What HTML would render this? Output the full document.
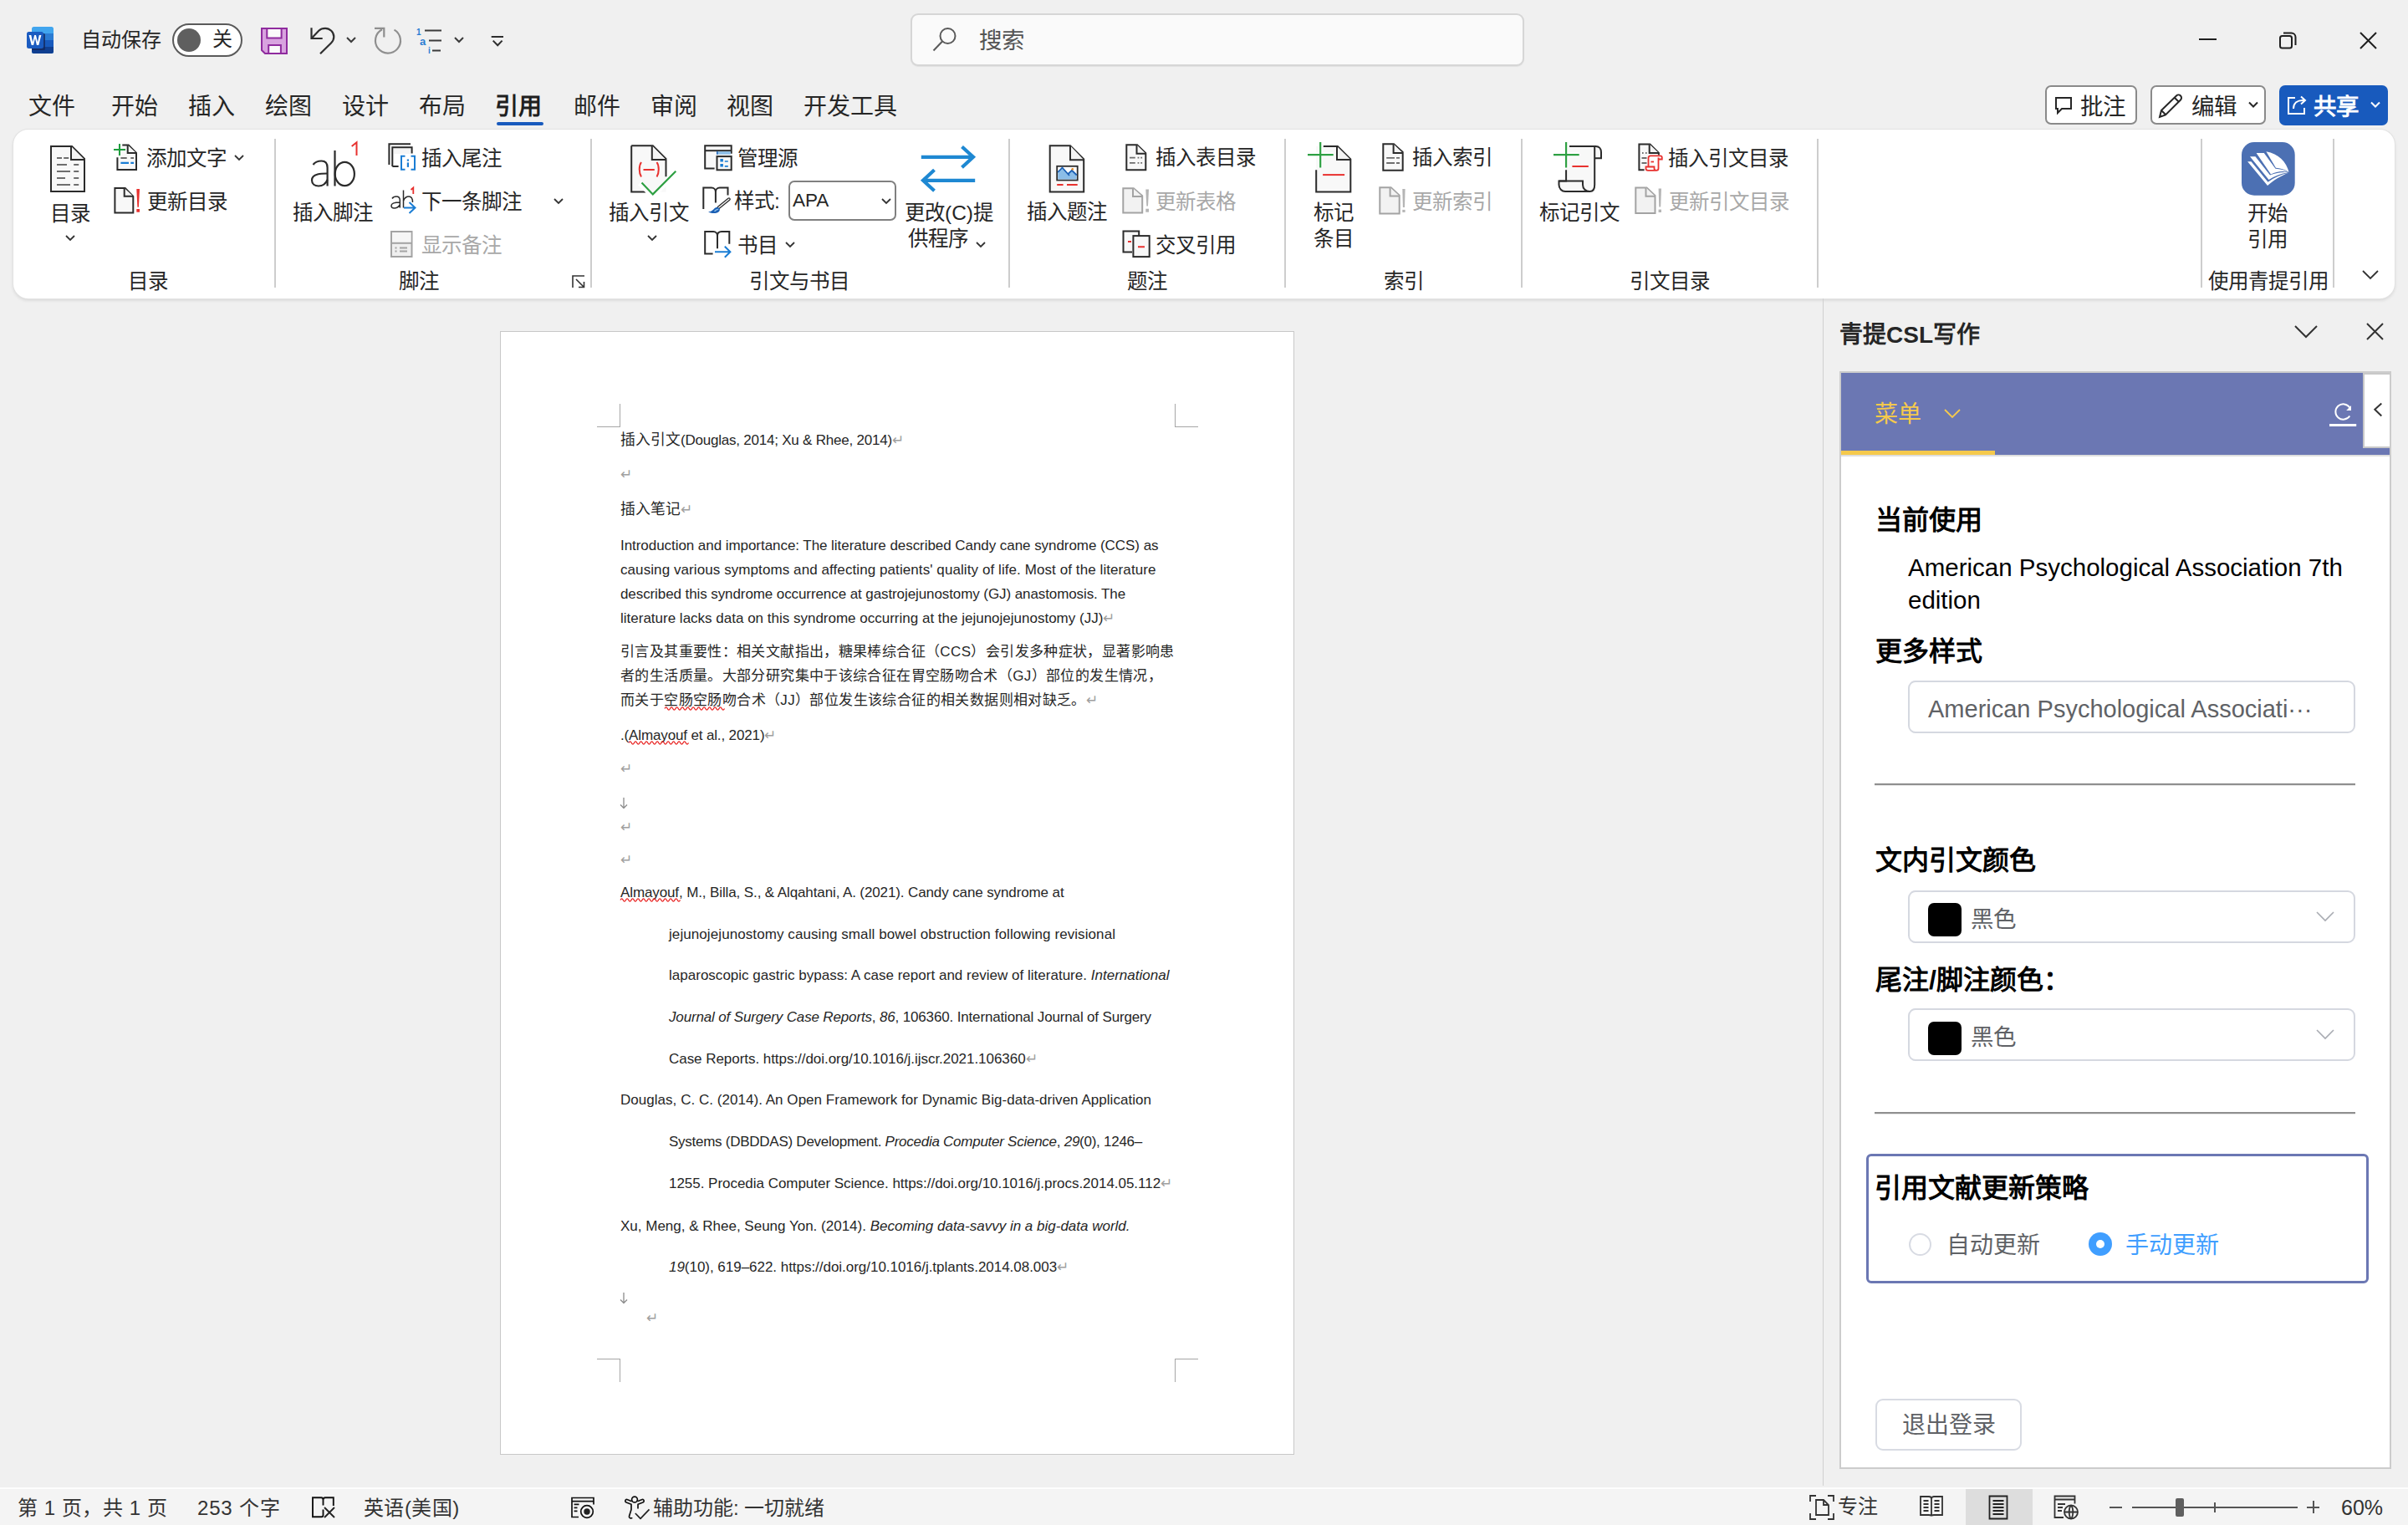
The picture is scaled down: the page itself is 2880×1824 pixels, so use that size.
<!DOCTYPE html>
<html lang="zh-CN"><head><meta charset="utf-8">
<style>
html,body{margin:0;padding:0}
body{width:2880px;height:1824px;position:relative;overflow:hidden;background:#f0f0f0;font-family:"Liberation Sans",sans-serif;color:#262626}
.t{position:absolute;white-space:nowrap;line-height:1}
.a{position:absolute}
svg{position:absolute;overflow:visible}
.dis{color:#a8a8a8}
.pm{color:#a0a0a0;font-size:17px;letter-spacing:0}
.sq{}
</style></head><body>
<!-- TITLE BAR -->
<svg style="left:32px;top:32px" width="32" height="32" viewBox="0 0 32 32">
<rect x="6" y="0" width="26" height="32" rx="2.5" fill="#41a5ee"/>
<rect x="6" y="8" width="26" height="8" fill="#2b7cd3"/>
<rect x="6" y="16" width="26" height="8" fill="#185abd"/>
<path d="M6 24h26v5.5a2.5 2.5 0 0 1-2.5 2.5h-21A2.5 2.5 0 0 1 6 29.5z" fill="#103f91"/>
<rect x="6" y="8" width="16" height="20" rx="1.5" fill="#13275a" opacity="0.75"/>
<rect x="0" y="6" width="20" height="20" rx="2.5" fill="#1a5bc0"/>
<path d="M2.6 10H5.3L7.1 18.6 9.1 10H11L13 18.6 14.8 10H17.4L14.3 22H11.9L10 13.8 8.1 22H5.7Z" fill="#fff"/>
</svg>
<div class="t" style="left:97px;top:36px;font-size:24px">自动保存</div>
<div class="a" style="left:206px;top:28px;width:80px;height:36px;border:2px solid #5a5a5a;border-radius:20px;background:#fff"></div>
<div class="a" style="left:212px;top:34px;width:28px;height:28px;border-radius:50%;background:#5f5f5f"></div>
<div class="t" style="left:254px;top:35px;font-size:24px">关</div>
<svg style="left:312px;top:33px" width="32" height="32" viewBox="0 0 32 32">
<path d="M1 1H31V31H5L1 27Z" fill="#d8a3df" stroke="#8f2b9e" stroke-width="2"/>
<rect x="7.3" y="1" width="17.3" height="11.5" fill="#fafafa" stroke="#8f2b9e" stroke-width="2"/>
<rect x="9.2" y="21" width="14.7" height="10" fill="#fafafa" stroke="#8f2b9e" stroke-width="2"/>
</svg>
<svg style="left:370px;top:33px" width="32" height="32" viewBox="0 0 32 32" fill="none" stroke="#2e2e2e" stroke-width="2.2">
<path d="M2.5 0.3V13H15.7"/>
<path d="M3 12.5L11.5 3.5C13.5 1.5 16 0.8 19 0.8C24.5 0.8 29.3 5.5 29.3 11C29.3 14 28 16.5 26 18.5L13 31.3"/>
</svg>
<svg style="left:414px;top:44px" width="12" height="8" viewBox="0 0 12 8" fill="none" stroke="#3b3b3b" stroke-width="2"><path d="M1 1l5 5 5-5"/></svg>
<svg style="left:448px;top:33px" width="34" height="34" viewBox="0 0 34 34" fill="none" stroke="#8f8f8f" stroke-width="2.2">
<path d="M9 2.3A15 15 0 1 0 23.5 2.6"/><path d="M0 0.8H11.3V11.5"/>
</svg>
<svg style="left:497px;top:33px" width="34" height="32" viewBox="0 0 34 32">
<text x="1" y="9" font-size="10" font-family="Liberation Sans" font-weight="700" fill="#2b7cd3">1</text>
<text x="5" y="21" font-size="13" font-family="Liberation Sans" font-weight="700" fill="#2b7cd3">a</text>
<text x="15" y="31" font-size="10" font-family="Liberation Sans" font-weight="700" fill="#2b7cd3">i</text>
<path d="M11 3.5h20M16 15.5h15M20 27.5h10" stroke="#3b3b3b" stroke-width="2"/>
</svg>
<svg style="left:543px;top:44px" width="12" height="8" viewBox="0 0 12 8" fill="none" stroke="#3b3b3b" stroke-width="2"><path d="M1 1l5 5 5-5"/></svg>
<svg style="left:586px;top:41px" width="18" height="16" viewBox="0 0 18 16" fill="none" stroke="#2e2e2e" stroke-width="2"><path d="M1.7 3H16M3.7 7.6L9.2 13.2 14.6 7.6"/></svg>

<!-- search -->
<div class="a" style="left:1089px;top:16px;width:730px;height:59px;border:2px solid #d6d6d6;border-radius:9px;background:#fafafa;box-shadow:0 1px 1px rgba(0,0,0,0.06)"></div>
<svg style="left:1115px;top:32px" width="30" height="32" viewBox="0 0 30 32" fill="none" stroke="#5a5a5a" stroke-width="2"><circle cx="18.5" cy="11" r="9"/><path d="M12 17.5L1.5 28.5"/></svg>
<div class="t" style="left:1171px;top:35px;font-size:27.5px;color:#555">搜索</div>

<!-- window controls -->
<div class="a" style="left:2630px;top:46px;width:21px;height:2px;background:#1f1f1f"></div>
<svg style="left:2726px;top:38px" width="21" height="21" viewBox="0 0 21 21" fill="none" stroke="#1f1f1f" stroke-width="2"><rect x="1" y="5" width="14" height="14.5" rx="2.5"/><path d="M5 1.5h9.5a5 5 0 0 1 5 5V16"/></svg>
<svg style="left:2822px;top:38px" width="21" height="21" viewBox="0 0 21 21" fill="none" stroke="#1f1f1f" stroke-width="2"><path d="M1 1l19 19M20 1L1 20"/></svg>

<!-- TABS -->
<div class="t" style="left:34px;top:114px;font-size:28px">文件</div>
<div class="t" style="left:133px;top:114px;font-size:28px">开始</div>
<div class="t" style="left:225px;top:114px;font-size:28px">插入</div>
<div class="t" style="left:317px;top:114px;font-size:28px">绘图</div>
<div class="t" style="left:409px;top:114px;font-size:28px">设计</div>
<div class="t" style="left:501px;top:114px;font-size:28px">布局</div>
<div class="t" style="left:592px;top:114px;font-size:28px;font-weight:700;color:#1f1f1f">引用</div>
<div class="a" style="left:594px;top:146px;width:56px;height:4px;border-radius:2px;background:#185abd"></div>
<div class="t" style="left:686px;top:114px;font-size:28px">邮件</div>
<div class="t" style="left:778px;top:114px;font-size:28px">审阅</div>
<div class="t" style="left:869px;top:114px;font-size:28px">视图</div>
<div class="t" style="left:961px;top:114px;font-size:28px">开发工具</div>

<!-- right buttons -->
<div class="a" style="left:2446px;top:102px;width:106px;height:43px;border:2px solid #8a8a8a;border-radius:7px;background:#fff"></div>
<svg style="left:2457px;top:115px" width="22" height="22" viewBox="0 0 22 22" fill="none" stroke="#262626" stroke-width="2"><path d="M2 2h18v13H9l-5 5v-5H2z"/></svg>
<div class="t" style="left:2488px;top:114px;font-size:27.5px">批注</div>
<div class="a" style="left:2572px;top:102px;width:134px;height:43px;border:2px solid #8a8a8a;border-radius:7px;background:#fff"></div>
<svg style="left:2581px;top:112px" width="34" height="30" viewBox="0 0 34 30" fill="none" stroke="#262626" stroke-width="2"><path d="M2 28l2-8L22 2.5a3.5 3.5 0 0 1 5 5L9 25.5z M20 5l5 5 M4 20l5 5"/></svg>
<div class="t" style="left:2621px;top:114px;font-size:27.5px">编辑</div>
<svg style="left:2689px;top:121px" width="12" height="9" viewBox="0 0 12 9" fill="none" stroke="#262626" stroke-width="2"><path d="M1 1.5l5 5 5-5"/></svg>
<div class="a" style="left:2726px;top:102px;width:130px;height:48px;border-radius:7px;background:#185abd"></div>
<svg style="left:2735px;top:113px" width="25" height="25" viewBox="0 0 25 25" fill="none" stroke="#fff" stroke-width="2"><path d="M10 4H2v19h19v-7"/><path d="M8 17c0-7 5-10 11-10h1.5M17 2.5l5 4.5-5 4.5"/></svg>
<div class="t" style="left:2767px;top:114px;font-size:27.5px;color:#fff;font-weight:700">共享</div>
<svg style="left:2835px;top:121px" width="12" height="9" viewBox="0 0 12 9" fill="none" stroke="#fff" stroke-width="2"><path d="M1 1.5l5 5 5-5"/></svg>

<!-- RIBBON -->
<div class="a" style="left:16px;top:155px;width:2848px;height:202px;border-radius:18px;background:#fff;box-shadow:0 0 0 1px #e2e2e2,0 2px 4px rgba(0,0,0,0.12)"></div>
<!-- separators -->
<div class="a" style="left:328px;top:166px;width:2px;height:178px;background:#cdcdcd"></div>
<div class="a" style="left:706px;top:166px;width:2px;height:178px;background:#cdcdcd"></div>
<div class="a" style="left:1206px;top:166px;width:2px;height:178px;background:#cdcdcd"></div>
<div class="a" style="left:1536px;top:166px;width:2px;height:178px;background:#cdcdcd"></div>
<div class="a" style="left:1819px;top:166px;width:2px;height:178px;background:#cdcdcd"></div>
<div class="a" style="left:2173px;top:166px;width:2px;height:178px;background:#cdcdcd"></div>
<div class="a" style="left:2632px;top:166px;width:2px;height:178px;background:#cdcdcd"></div>
<div class="a" style="left:2790px;top:166px;width:2px;height:178px;background:#cdcdcd"></div>
<!-- group labels -->
<div class="t" style="left:153px;top:325px;font-size:24.5px">目录</div>
<div class="t" style="left:477px;top:325px;font-size:24.5px">脚注</div>
<svg style="left:684px;top:329px" width="16" height="16" viewBox="0 0 16 16" fill="none" stroke="#333" stroke-width="1.6"><path d="M1 15V1h14M5 5l9.5 9.5M14.5 8v6.5H8"/></svg>
<div class="t" style="left:896px;top:325px;font-size:24.5px">引文与书目</div>
<div class="t" style="left:1348px;top:325px;font-size:24.5px">题注</div>
<div class="t" style="left:1655px;top:325px;font-size:24.5px">索引</div>
<div class="t" style="left:1949px;top:325px;font-size:24.5px">引文目录</div>
<div class="t" style="left:2641px;top:325px;font-size:24.5px">使用青提引用</div>
<svg style="left:2825px;top:323px" width="20" height="12" viewBox="0 0 20 12" fill="none" stroke="#333" stroke-width="1.8"><path d="M1 1l9 9 9-9"/></svg>

<!-- 目录 big -->
<svg style="left:60px;top:174px" width="42" height="56" viewBox="0 0 42 56">
<path d="M1 1H26L41 16V55H1Z" fill="#f8f8f8" stroke="#2b2b2b" stroke-width="2"/>
<path d="M25 1V17H41" fill="#f4f4f4" stroke="#2b2b2b" stroke-width="2"/>
<path d="M8 15h6M16.2 15h6M8 23h12M28.2 23h6M8 31h16M28.2 31h6M8 39h10M28.2 39h6M8 47h16M28.2 47h6" stroke="#6e6e6e" stroke-width="2"/>
</svg>
<div class="t" style="left:60px;top:244px;font-size:24.5px">目录</div>
<svg style="left:78px;top:281px" width="12" height="8" viewBox="0 0 12 8" fill="none" stroke="#333" stroke-width="1.8"><path d="M1 1l5 5 5-5"/></svg>
<!-- 添加文字 -->
<svg style="left:136px;top:172px" width="30" height="34" viewBox="0 0 30 34">
<path d="M4.4 1.6H17.7L27 11V31H4.4Z" fill="#f8f8f8"/>
<path d="M10.3 1.6H17.7L27 11V31H4.4V16.3" fill="none" stroke="#2b2b2b" stroke-width="2"/>
<path d="M16.7 1.6V10.9H27" fill="#f4f4f4" stroke="#2b2b2b" stroke-width="2"/>
<path d="M0 7h14M7 0v14" stroke="#1e9e3e" stroke-width="2"/>
<path d="M8.4 16.9h7.3M20.3 16.9h3.7" stroke="#6e6e6e" stroke-width="2"/>
<path d="M8.4 22.9h9.6M20.3 22.9h3.7" stroke="#1a7dd4" stroke-width="2.4"/>
</svg>
<div class="t" style="left:175px;top:178px;font-size:24.5px">添加文字</div>
<svg style="left:280px;top:185px" width="12" height="8" viewBox="0 0 12 8" fill="none" stroke="#333" stroke-width="1.8"><path d="M1 1l5 5 5-5"/></svg>
<!-- 更新目录 -->
<svg style="left:136px;top:224px" width="32" height="32" viewBox="0 0 32 32">
<path d="M1.4 1.1H13.7L23.3 10.8V30.4H1.4Z" fill="#f8f8f8" stroke="#2b2b2b" stroke-width="2"/>
<path d="M12.7 1.1V10.8H23.3" fill="#f4f4f4" stroke="#2b2b2b" stroke-width="2"/>
<path d="M27.3 2H31L29.9 23.7H28.4Z" fill="#e8312f"/><rect x="27.3" y="26" width="3.7" height="3.7" fill="#e8312f"/>
</svg>
<div class="t" style="left:176px;top:230px;font-size:24.5px">更新目录</div>

<!-- 插入脚注 big -->
<svg style="left:368px;top:168px" width="64" height="58" viewBox="0 0 64 58" fill="none" stroke="#2b2b2b" stroke-width="2.2">
<path d="M32.5 12V54.5"/><ellipse cx="44.3" cy="40" rx="11.6" ry="14.2"/>
<path d="M6.5 29C9 25.5 13 24.5 16.5 24.5C21.5 24.5 23.6 28 23.6 32.5V54.5"/>
<path d="M23.6 39.5C17 39.5 5 39.5 5 47.5C5 52 8.5 54.5 13 54.5C18 54.5 22 51 23.6 47"/>
<path d="M52.7 7L58.5 2.3V18" stroke="#e8312f" stroke-width="2"/>
</svg>
<div class="t" style="left:350px;top:243px;font-size:24.5px">插入脚注</div>
<!-- 插入尾注 -->
<svg style="left:464px;top:171px" width="34" height="34" viewBox="0 0 34 34">
<path d="M1.4 26V1.3H27" fill="none" stroke="#2b2b2b" stroke-width="2"/>
<path d="M5.3 28V5.2H28.6V12.6" fill="none" stroke="#2b2b2b" stroke-width="2"/>
<path d="M7 7h20v6H7z" fill="#f5f5f5"/>
<path d="M5.3 28H12.6" stroke="#2b2b2b" stroke-width="2"/>
<path d="M20.5 15.8H16V31.8H20.5M27.5 15.8H32V31.8H27.5" fill="none" stroke="#1a7dd4" stroke-width="2"/>
<rect x="22.8" y="19.5" width="2.2" height="2.2" fill="#1a7dd4"/><rect x="22.8" y="23.4" width="2.2" height="5.5" fill="#1a7dd4"/>
</svg>
<div class="t" style="left:504px;top:178px;font-size:24.5px">插入尾注</div>
<!-- 下一条脚注 -->
<svg style="left:466px;top:222px" width="34" height="36" viewBox="0 0 34 36" fill="none" stroke="#2b2b2b" stroke-width="1.5">
<path d="M16.5 5.5V26.5"/><path d="M16.5 18C18 14.5 20 13 23 13C26 13 27.5 16 27.5 20"/>
<path d="M3 15.5C4 13.8 6 13 8 13C11 13 12.3 15 12.3 17.5V26.5M12.3 20C8.5 20 2 20.5 2 24C2 26 3.5 27 5.5 27C8.5 27 11 25 12.3 23"/>
<path d="M25.5 5L28.3 2.5V10" stroke="#e8312f" stroke-width="1.8"/>
<path d="M17 26.5H30.5M23.5 20l7 6.5-7 6.5" stroke="#1a7dd4" stroke-width="2"/>
</svg>
<div class="t" style="left:504px;top:230px;font-size:24.5px">下一条脚注</div>
<svg style="left:662px;top:237px" width="12" height="8" viewBox="0 0 12 8" fill="none" stroke="#333" stroke-width="1.8"><path d="M1 1l5 5 5-5"/></svg>
<!-- 显示备注 -->
<svg style="left:467px;top:276px" width="27" height="32" viewBox="0 0 27 32">
<rect x="1" y="1" width="24.5" height="30" fill="#efefef" stroke="#a3a3a3" stroke-width="2"/>
<rect x="2" y="2" width="22.5" height="12.8" fill="#f6f6f6"/>
<path d="M1 14.8H25.5" stroke="#a3a3a3" stroke-width="2"/>
<path d="M5.5 20.5h2M5.5 24.5h2M11 20.5h9M11 24.5h9" stroke="#a3a3a3" stroke-width="1.8"/>
</svg>
<div class="t dis" style="left:504px;top:282px;font-size:24.5px">显示备注</div>

<!-- 插入引文 big -->
<svg style="left:754px;top:173px" width="58" height="62" viewBox="0 0 58 62">
<path d="M1.2 1.3H26.8L42.5 17V56.4H1.2Z" fill="#f8f8f8"/>
<path d="M1.2 1.3H26.8L42.5 17V38.2M18.4 56.4H1.2V1.3" fill="none" stroke="#2b2b2b" stroke-width="2"/>
<path d="M25.8 1.3V18H42.5" fill="#f4f4f4" stroke="#2b2b2b" stroke-width="2"/>
<path d="M13 21C10 25 10 34 13 38.5M31.5 21C34.5 25 34.5 34 31.5 38.5M15.5 29.9H28.8" fill="none" stroke="#e8312f" stroke-width="2"/>
<path d="M11 46L26.8 61.5 56.5 31.8" fill="none" stroke="#fff" stroke-width="6"/>
<path d="M13.5 45.6L26.8 59.4 54.3 31.8" fill="none" stroke="#2ea043" stroke-width="2.2"/>
</svg>
<div class="t" style="left:728px;top:243px;font-size:24.5px">插入引文</div>
<svg style="left:774px;top:281px" width="12" height="8" viewBox="0 0 12 8" fill="none" stroke="#333" stroke-width="1.8"><path d="M1 1l5 5 5-5"/></svg>
<!-- 管理源 -->
<svg style="left:842px;top:173px" width="34" height="32" viewBox="0 0 34 32">
<path d="M1.2 1.3H32.7V28.4H1.2Z" fill="#f8f8f8"/>
<path d="M12.6 28.4H1.2V1.3H32.7V10.7" fill="none" stroke="#2b2b2b" stroke-width="2"/>
<path d="M1.2 7.2H32.7" stroke="#2b2b2b" stroke-width="2"/>
<rect x="15" y="8.2" width="16.7" height="3.5" fill="#8bbde8"/><rect x="15" y="8.2" width="1.5" height="3.5" fill="#1a5fb4"/>
<rect x="15.5" y="14.1" width="17.2" height="16.2" fill="#f8f8f8" stroke="#2b2b2b" stroke-width="2"/>
<rect x="19.4" y="17" width="3.5" height="3.5" fill="#1a7dd4"/><rect x="19.4" y="23" width="3.5" height="3.5" fill="#1a7dd4"/>
<path d="M24.8 20h4M24.8 25.9h4" stroke="#1a7dd4" stroke-width="1.6"/>
</svg>
<div class="t" style="left:882px;top:178px;font-size:24.5px">管理源</div>
<!-- 样式 -->
<svg style="left:840px;top:223px" width="34" height="34" viewBox="0 0 34 34">
<path d="M1.3 27V1.6H11C13.8 1.6 15.9 3.5 15.9 6.5V19.5M15.9 6.5C15.9 3.5 18 1.6 20.8 1.6H30.5V10.5" fill="none" stroke="#2b2b2b" stroke-width="2"/>
<path d="M31.8 15.3L19.5 25.3" stroke="#fff" stroke-width="6" stroke-linecap="round"/>
<path d="M31.8 15.3L19.5 25.3" stroke="#2b2b2b" stroke-width="4" stroke-linecap="round"/>
<path d="M31.8 15.3L19.5 25.3" stroke="#f8f8f8" stroke-width="1.4" stroke-linecap="round"/>
<path d="M7 30.3C10.5 30.5 12.5 28.5 14.5 26.3C16.5 24.3 20 24.5 20.8 27C21.3 30 18.5 31.8 15.5 32C12 32.3 9 31.8 7 30.3Z" fill="#1a5fb4"/>
<path d="M14.5 29.8C16 28.3 17.5 27.3 19.2 27.3" stroke="#8bbde8" stroke-width="1.6" fill="none"/>
</svg>
<div class="t" style="left:878px;top:229px;font-size:24.5px">样式:</div>
<div class="a" style="left:943px;top:216px;width:125px;height:44px;border:2px solid #808080;border-radius:7px;background:#fff"></div>
<div class="t" style="left:948px;top:229px;font-size:22.5px">APA</div>
<svg style="left:1054px;top:237px" width="12" height="8" viewBox="0 0 12 8" fill="none" stroke="#333" stroke-width="1.8"><path d="M1 1l5 5 5-5"/></svg>
<!-- 书目 -->
<svg style="left:842px;top:276px" width="34" height="32" viewBox="0 0 34 32">
<path d="M10.6 27.4H1.2V1H11.2C14 1 16 3 16 6V21.3M16 6C16 3 18 1 21 1H30.3V15.8" fill="none" stroke="#2b2b2b" stroke-width="2"/>
<path d="M13 25.2H31.5M24.8 18.8l6.6 6.5-6.6 6.5" fill="none" stroke="#fff" stroke-width="4"/>
<path d="M13 25.2H31.5M24.8 18.8l6.6 6.5-6.6 6.5" fill="none" stroke="#1a7dd4" stroke-width="2"/>
</svg>
<div class="t" style="left:882px;top:282px;font-size:24.5px">书目</div>
<svg style="left:939px;top:289px" width="12" height="8" viewBox="0 0 12 8" fill="none" stroke="#333" stroke-width="1.8"><path d="M1 1l5 5 5-5"/></svg>
<!-- 更改提供程序 -->
<svg style="left:1100px;top:173px" width="68" height="58" viewBox="0 0 68 58" fill="none" stroke="#1e88d2" stroke-width="4.2">
<path d="M1.8 14.8H64.5M50.5 2.5L64 14.8 50.5 27.2"/>
<path d="M3.5 42.8H66.2M17.5 30.3L4 42.8 17.5 55.2"/>
</svg>
<div class="t" style="left:1082px;top:243px;font-size:24.5px">更改(C)提</div>
<div class="t" style="left:1086px;top:274px;font-size:24.5px">供程序</div>
<svg style="left:1167px;top:289px" width="12" height="8" viewBox="0 0 12 8" fill="none" stroke="#333" stroke-width="1.8"><path d="M1 1l5 5 5-5"/></svg>

<!-- 插入题注 big -->
<svg style="left:1254px;top:173px" width="44" height="58" viewBox="0 0 44 58">
<path d="M1.7 1.3H26L42.2 17.5V56.5H1.7Z" fill="#f8f8f8" stroke="#2b2b2b" stroke-width="2"/>
<path d="M26 1.3V18.2H42.2" fill="#f4f4f4" stroke="#2b2b2b" stroke-width="2"/>
<rect x="10.2" y="25.8" width="24.5" height="16.7" fill="#fff" stroke="#2b2b2b" stroke-width="1.8"/>
<path d="M11.2 40.5V32.5L16.5 27.5 24 35.5 28 31.5 33.5 37V41.5H11.2Z" fill="#8bbde8"/>
<path d="M11.2 33L16.5 27.5 25 37M23.5 35 28 30.8 33.8 36.5" fill="none" stroke="#1a5fb4" stroke-width="1.8"/>
<circle cx="28.7" cy="29.3" r="1.3" fill="#e8871e"/>
<path d="M10.2 48h7.4M22 48h12.7" stroke="#e8312f" stroke-width="2"/>
</svg>
<div class="t" style="left:1228px;top:242px;font-size:24.5px">插入题注</div>
<!-- 插入表目录 -->
<svg style="left:1346px;top:172px" width="26" height="33" viewBox="0 0 26 33">
<path d="M1.3 1.3H14L24.3 11.2V31.2H1.3Z" fill="#f8f8f8" stroke="#2b2b2b" stroke-width="2"/>
<path d="M13.5 1.3V11.8H24.3" fill="#f4f4f4" stroke="#2b2b2b" stroke-width="2"/>
<path d="M5 16.7h6.8M5 22.9h6.8" stroke="#6e6e6e" stroke-width="1.8"/>
<path d="M14.6 16.7h1.8M18.3 16.7h1.8M14.6 22.9h1.8M18.3 22.9h1.8" stroke="#6e6e6e" stroke-width="1.8"/>
</svg>
<div class="t" style="left:1382px;top:177px;font-size:24.5px">插入表目录</div>
<!-- 更新表格 -->
<svg style="left:1342px;top:224px" width="34" height="32" viewBox="0 0 34 32">
<path d="M1.3 1.2H13.8L24.2 10.3V30.5H1.3Z" fill="#f2f2f2" stroke="#a3a3a3" stroke-width="2"/>
<path d="M13 1.2V10.9H24.2" fill="#f2f2f2" stroke="#a3a3a3" stroke-width="2"/>
<path d="M28.3 2.5H32L31 22.5H29.3Z" fill="#b5b5b5"/><rect x="28.3" y="25.7" width="3.7" height="4" fill="#b5b5b5"/>
</svg>
<div class="t dis" style="left:1382px;top:230px;font-size:24.5px">更新表格</div>
<!-- 交叉引用 -->
<svg style="left:1342px;top:275px" width="34" height="34" viewBox="0 0 34 34">
<path d="M1.5 1.5H20.2V26.4H1.5Z" fill="#f8f8f8"/>
<path d="M12 26.4H1.5V1.5H20.2V7" fill="none" stroke="#2b2b2b" stroke-width="2"/>
<rect x="13.4" y="7.1" width="19.3" height="25" fill="#f8f8f8" stroke="#2b2b2b" stroke-width="2"/>
<path d="M7 14h4M19 20.2h8" stroke="#e8312f" stroke-width="2"/>
</svg>
<div class="t" style="left:1382px;top:282px;font-size:24.5px">交叉引用</div>

<!-- 标记条目 big -->
<svg style="left:1563px;top:169px" width="54" height="62" viewBox="0 0 54 62">
<path d="M11.2 6H36.8L52.3 21.3V60.6H11.2Z" fill="#f8f8f8"/>
<path d="M19.8 6H36.8L52.3 21.3V60.6H11.2V34.3" fill="none" stroke="#2b2b2b" stroke-width="2"/>
<path d="M36 6V22H52.3" fill="#f4f4f4" stroke="#2b2b2b" stroke-width="2"/>
<path d="M1 16.1H31.7M16.2 1V31.4" stroke="#fff" stroke-width="5"/>
<path d="M1 16.1H31.7M16.2 1V31.4" stroke="#2ea043" stroke-width="2.2"/>
<path d="M19.1 40.1H45.1" stroke="#e8312f" stroke-width="2"/>
</svg>
<div class="t" style="left:1571px;top:243px;font-size:24.5px">标记</div>
<div class="t" style="left:1571px;top:274px;font-size:24.5px">条目</div>
<!-- 插入索引 -->
<svg style="left:1653px;top:171px" width="26" height="34" viewBox="0 0 26 34">
<path d="M1.3 1.3H14L24.7 11V32.7H1.3Z" fill="#f8f8f8" stroke="#2b2b2b" stroke-width="2"/>
<path d="M13.6 1.3V12H24.7" fill="#f4f4f4" stroke="#2b2b2b" stroke-width="2"/>
<path d="M5.2 17.9h9.8M17 17.9h4M5.2 24h9.8M17 24h4" stroke="#6e6e6e" stroke-width="1.8"/>
</svg>
<div class="t" style="left:1689px;top:177px;font-size:24.5px">插入索引</div>
<!-- 更新索引 -->
<svg style="left:1649px;top:223px" width="34" height="34" viewBox="0 0 34 34">
<path d="M1.3 1.2H14.6L24.7 10.6V32.6H1.3Z" fill="#f2f2f2" stroke="#a3a3a3" stroke-width="2"/>
<path d="M13.6 1.2V11.6H24.7" fill="#f2f2f2" stroke="#a3a3a3" stroke-width="2"/>
<path d="M28.3 3H31.6L31 25H28.9Z" fill="#b5b5b5"/><rect x="28.3" y="27.9" width="3.3" height="3" fill="#b5b5b5"/>
</svg>
<div class="t dis" style="left:1689px;top:230px;font-size:24.5px">更新索引</div>

<!-- 标记引文 big -->
<svg style="left:1857px;top:169px" width="62" height="62" viewBox="0 0 62 62">
<path d="M16.1 6H51.5C55.5 6 58 9 58 13V20.2H50.2V52C50.2 56 49 60 44.5 60H15C11 60 7.5 56.5 7.5 52V47.6H16.1Z" fill="#f8f8f8"/>
<path d="M20 6H51.5C55.5 6 58 9 58 13V20.2H50.2" fill="none" stroke="#2b2b2b" stroke-width="2"/>
<path d="M16.1 34.3V47.6H7.5V52C7.5 56.5 11 60 15 60H44.5C49 60 50.2 56 50.2 52V6" fill="none" stroke="#2b2b2b" stroke-width="2"/>
<path d="M7.5 47.6H36V52C36 56.5 39.5 60 44.5 60" fill="none" stroke="#2b2b2b" stroke-width="2"/>
<path d="M1 16.1H31.7M16.1 1V31.4" stroke="#fff" stroke-width="5"/>
<path d="M1 16.1H31.7M16.1 1V31.4" stroke="#2ea043" stroke-width="2.2"/>
<path d="M23.4 30H42.8" stroke="#e8312f" stroke-width="2"/>
</svg>
<div class="t" style="left:1841px;top:243px;font-size:24.5px">标记引文</div>
<!-- 插入引文目录 -->
<svg style="left:1959px;top:171px" width="30" height="34" viewBox="0 0 30 34">
<path d="M1.4 1.4H14.4L24.9 11.8V32.3H1.4Z" fill="#f8f8f8"/>
<path d="M7.6 32.3H1.4V1.4H14.4L24.9 11.8V14.5" fill="none" stroke="#2b2b2b" stroke-width="2"/>
<path d="M13.7 1.4V12H24.9" fill="#f4f4f4" stroke="#2b2b2b" stroke-width="2"/>
<path d="M5 12h1.6M9 12h1.6M4.5 18h6M4.5 24h6" stroke="#6e6e6e" stroke-width="1.8"/>
<path d="M12.5 18C12.5 16.5 13.5 15.3 15 15.3H26.5C28 15.3 28.8 16.3 28.8 17.5V19.5H24.5V30.5C24.5 32 23.5 32.8 22 32.8H12C10.5 32.8 9.5 32 9.5 30.5V28.5H19.5V30.5C19.5 32 20.5 32.8 22 32.8M12.5 28.5V18M24.5 19.5V17.5" fill="#fff" stroke="#e8312f" stroke-width="1.8"/>
<path d="M15.5 22.5h3.5" stroke="#e8312f" stroke-width="1.8"/>
</svg>
<div class="t" style="left:1995px;top:178px;font-size:24.5px">插入引文目录</div>
<!-- 更新引文目录 -->
<svg style="left:1955px;top:223px" width="34" height="34" viewBox="0 0 34 34">
<path d="M1.3 1.5H14.5L24.5 11V32H1.3Z" fill="#f2f2f2" stroke="#a3a3a3" stroke-width="2"/>
<path d="M13.5 1.5V11.7H24.5" fill="#f2f2f2" stroke="#a3a3a3" stroke-width="2"/>
<path d="M28.6 2.5H32L31.2 24.5H29.3Z" fill="#b5b5b5"/><rect x="28.6" y="27.6" width="3.4" height="3.4" fill="#b5b5b5"/>
</svg>
<div class="t dis" style="left:1996px;top:230px;font-size:24.5px">更新引文目录</div>

<!-- 开始引用 -->
<svg style="left:2681px;top:170px" width="64" height="64" viewBox="0 0 64 64">
<rect x="0" y="0" width="63.7" height="63.7" rx="15" fill="#4c70b3"/>
<path d="M29.4 11.2C44 13.5 54 24 56.6 36.1C52 32.5 46 31 40.9 30.8Z" fill="#fff"/>
<path d="M17.6 13.1H26.8L40.5 31.8C46 32 52 33.5 55.5 35.8C48 34.2 41 35.5 35 38.5Z" fill="#fff"/>
<path d="M10 17.3H16.5L34 39.6C41 36.6 49 35.5 55.8 36.3C47 37.6 39 41 32.5 45Z" fill="#fff"/>
<path d="M7.1 23.3H11.5L31.5 47.8C39 42.5 47 38.6 56.2 36.8C47 40 38 46 31 52Z" fill="#fff"/>
</svg>
<div class="t" style="left:2688px;top:244px;font-size:24.5px">开始</div>
<div class="t" style="left:2688px;top:275px;font-size:24.5px">引用</div>


<!-- DOCUMENT PAGE -->
<div class="a" style="left:598px;top:396px;width:948px;height:1342px;border:1px solid #c8c8c8;background:#fff"></div>
<div class="a" style="left:714px;top:510px;width:28px;height:1px;background:#a6a6a6"></div>
<div class="a" style="left:741px;top:483px;width:1px;height:28px;background:#a6a6a6"></div>
<div class="a" style="left:1405px;top:510px;width:28px;height:1px;background:#a6a6a6"></div>
<div class="a" style="left:1405px;top:483px;width:1px;height:28px;background:#a6a6a6"></div>
<div class="a" style="left:714px;top:1625px;width:28px;height:1px;background:#a6a6a6"></div>
<div class="a" style="left:741px;top:1625px;width:1px;height:28px;background:#a6a6a6"></div>
<div class="a" style="left:1405px;top:1625px;width:28px;height:1px;background:#a6a6a6"></div>
<div class="a" style="left:1405px;top:1625px;width:1px;height:28px;background:#a6a6a6"></div>
<div id="doc" style="position:absolute;left:0;top:0;font-size:17px;color:#262626">
<div class="t dl" style="left:742px;top:518px"><span style="font-size:17.8px">插入引文</span><span id="l1" style="letter-spacing:-0.22px">(Douglas, 2014; Xu &amp; Rhee, 2014)</span><span class="pm">↵</span></div>
<div class="t dl" style="left:742px;top:559px"><span class="pm">↵</span></div>
<div class="t dl" style="left:742px;top:601px"><span style="font-size:17.8px">插入笔记</span><span class="pm">↵</span></div>
<div class="t dl" style="left:742px;top:644px;letter-spacing:-0.054px">Introduction and importance: The literature described Candy cane syndrome (CCS) as</div>
<div class="t dl" style="left:742px;top:673px;letter-spacing:0.083px">causing various symptoms and affecting patients' quality of life. Most of the literature</div>
<div class="t dl" style="left:742px;top:702px;letter-spacing:-0.09px">described this syndrome occurrence at gastrojejunostomy (GJ) anastomosis. The</div>
<div class="t dl" style="left:742px;top:731px">literature lacks data on this syndrome occurring at the jejunojejunostomy (JJ)<span class="pm">↵</span></div>
<div class="t dl" style="left:742px;top:771px;letter-spacing:0.38px">引言及其重要性：相关文献指出，糖果棒综合征（CCS）会引发多种症状，显著影响患</div>
<div class="t dl" style="left:742px;top:800px;letter-spacing:0.376px">者的生活质量。大部分研究集中于该综合征在胃空肠吻合术（GJ）部位的发生情况，</div>
<div class="t dl" style="left:742px;top:829px;letter-spacing:0.39px">而关于<span class="sq">空肠空肠</span>吻合术（JJ）部位发生该综合征的相关数据则相对缺乏。<span class="pm">↵</span></div>
<div class="t dl" style="left:742px;top:871px;letter-spacing:-0.14px">.(<span class="sq">Almayouf</span> et al., 2021)<span class="pm">↵</span></div>
<div class="t dl" style="left:742px;top:911px"><span class="pm">↵</span></div>
<svg style="left:741px;top:954px" width="10" height="14" viewBox="0 0 10 14" fill="none" stroke="#8c8c8c" stroke-width="1.3"><path d="M5 0V12.5M1 8.5l4 4 4-4"/></svg>
<div class="t dl" style="left:742px;top:981px"><span class="pm">↵</span></div>
<div class="t dl" style="left:742px;top:1020px"><span class="pm">↵</span></div>
<div class="t dl" style="left:742px;top:1059px;letter-spacing:-0.114px"><span class="sq">Almayouf</span>, M., Billa, S., &amp; Alqahtani, A. (2021). Candy cane syndrome at</div>
<div class="t dl" style="left:800px;top:1109px;letter-spacing:0.083px">jejunojejunostomy causing small bowel obstruction following revisional</div>
<div class="t dl" style="left:800px;top:1158px;letter-spacing:0.016px">laparoscopic gastric bypass: A case report and review of literature. <i>International</i></div>
<div class="t dl" style="left:800px;top:1208px;letter-spacing:-0.153px"><i>Journal of Surgery Case Reports</i>, <i>86</i>, 106360. International Journal of Surgery</div>
<div class="t dl" style="left:800px;top:1258px;letter-spacing:-0.044px">Case Reports. https://doi.org/10.1016/j.ijscr.2021.106360<span class="pm">↵</span></div>
<div class="t dl" style="left:742px;top:1307px;letter-spacing:0.036px">Douglas, C. C. (2014). An Open Framework for Dynamic Big-data-driven Application</div>
<div class="t dl" style="left:800px;top:1357px;letter-spacing:-0.26px">Systems (DBDDAS) Development. <i>Procedia Computer Science</i>, <i>29</i>(0), 1246–</div>
<div class="t dl" style="left:800px;top:1407px;letter-spacing:-0.03px">1255. Procedia Computer Science. https://doi.org/10.1016/j.procs.2014.05.112<span class="pm">↵</span></div>
<div class="t dl" style="left:742px;top:1458px">Xu, Meng, &amp; Rhee, Seung Yon. (2014). <i>Becoming data-savvy in a big-data world.</i></div>
<div class="t dl" style="left:800px;top:1507px;letter-spacing:-0.03px"><i>19</i>(10), 619–622. https://doi.org/10.1016/j.tplants.2014.08.003<span class="pm">↵</span></div>
<svg style="left:741px;top:1546px" width="10" height="14" viewBox="0 0 10 14" fill="none" stroke="#8c8c8c" stroke-width="1.3"><path d="M5 0V12.5M1 8.5l4 4 4-4"/></svg>
<div class="t dl" style="left:773px;top:1568px"><span class="pm">↵</span></div>
</div>

<svg style="left:795px;top:844px" width="74" height="6" viewBox="0 0 74 6" fill="none" stroke="#e8201f" stroke-width="1.3"><path d="M0 3.5 q1.625 -3.2 3.25 0 t3.25 0 t3.25 0 t3.25 0 t3.25 0 t3.25 0 t3.25 0 t3.25 0 t3.25 0 t3.25 0 t3.25 0 t3.25 0 t3.25 0 t3.25 0 t3.25 0 t3.25 0 t3.25 0 t3.25 0 t3.25 0 t3.25 0 t3.25 0 t3.25 0"/></svg>
<svg style="left:752px;top:885px" width="74" height="6" viewBox="0 0 74 6" fill="none" stroke="#e8201f" stroke-width="1.3"><path d="M0 3.5 q1.625 -3.2 3.25 0 t3.25 0 t3.25 0 t3.25 0 t3.25 0 t3.25 0 t3.25 0 t3.25 0 t3.25 0 t3.25 0 t3.25 0 t3.25 0 t3.25 0 t3.25 0 t3.25 0 t3.25 0 t3.25 0 t3.25 0 t3.25 0 t3.25 0 t3.25 0 t3.25 0"/></svg>
<svg style="left:742px;top:1073px" width="75" height="6" viewBox="0 0 75 6" fill="none" stroke="#e8201f" stroke-width="1.3"><path d="M0 3.5 q1.625 -3.2 3.25 0 t3.25 0 t3.25 0 t3.25 0 t3.25 0 t3.25 0 t3.25 0 t3.25 0 t3.25 0 t3.25 0 t3.25 0 t3.25 0 t3.25 0 t3.25 0 t3.25 0 t3.25 0 t3.25 0 t3.25 0 t3.25 0 t3.25 0 t3.25 0 t3.25 0"/></svg>
<!-- RIGHT PANE -->
<div class="a" style="left:2180px;top:357px;width:1px;height:1420px;background:#d0d0d0"></div>
<div class="t" style="left:2200px;top:387px;font-size:28px;font-weight:700;color:#262626">青提CSL写作</div>
<svg style="left:2744px;top:389px" width="28" height="16" viewBox="0 0 28 16" fill="none" stroke="#333" stroke-width="2"><path d="M1 1l13 13 13-13"/></svg>
<svg style="left:2830px;top:386px" width="21" height="21" viewBox="0 0 21 21" fill="none" stroke="#333" stroke-width="2"><path d="M1 1l19 19M20 1L1 20"/></svg>
<div class="a" style="left:2200px;top:444px;width:656px;height:1309px;border:2px solid #cccccc;background:#fff"></div>
<div class="a" style="left:2202px;top:446px;width:656px;height:98px;background:#6b77b3"></div>
<div class="a" style="left:2202px;top:539px;width:184px;height:5px;background:#f5c94c"></div>
<div class="a" style="left:2202px;top:544px;width:656px;height:2px;background:#dedede"></div>
<div class="a" style="left:2826px;top:446px;width:30px;height:86px;background:#fff;border:2px solid #c8c8c8;border-right:none"></div>
<svg style="left:2839px;top:482px" width="12" height="16" viewBox="0 0 12 16" fill="none" stroke="#333" stroke-width="2"><path d="M9.3 0.6L1.3 7.8l8 7.6"/></svg>
<svg style="left:2785px;top:480px" width="34" height="32" viewBox="0 0 34 32" fill="none" stroke="#fff" stroke-width="2"><path d="M25.3 7.5A9.2 9.2 0 1 0 25.3 17.5"/><path d="M21.2 10.9H27V5.1Z" fill="#fff" stroke="none"/><path d="M1 28.5H33.2" stroke-width="3"/></svg>
<div class="t" style="left:2242px;top:482px;font-size:28px;color:#f5c94c">菜单</div>
<svg style="left:2325px;top:489px" width="20" height="11" viewBox="0 0 20 11" fill="none" stroke="#f5c94c" stroke-width="1.8"><path d="M1 1l9 9 9-9"/></svg>

<div class="t" style="left:2243px;top:606px;font-size:32px;font-weight:700;color:#000">当前使用</div>
<div class="t" style="left:2282px;top:664px;font-size:29.5px;color:#000">American Psychological Association 7th</div>
<div class="t" style="left:2282px;top:703px;font-size:29.5px;color:#000">edition</div>
<div class="t" style="left:2243px;top:763px;font-size:32px;font-weight:700;color:#000">更多样式</div>
<div class="a" style="left:2282px;top:814px;width:531px;height:59px;border:2px solid #d5d8e0;border-radius:9px;background:#fff"></div>
<div class="t" style="left:2306px;top:834px;font-size:29px;color:#606266">American Psychological Associati···</div>
<div class="a" style="left:2242px;top:937px;width:575px;height:2px;background:#8f8f8f"></div>
<div class="a" style="left:2242px;top:939px;width:575px;height:1px;background:#e6e6e6"></div>
<div class="t" style="left:2243px;top:1013px;font-size:32px;font-weight:700;color:#000">文内引文颜色</div>
<div class="a" style="left:2282px;top:1065px;width:531px;height:59px;border:2px solid #d5d8e0;border-radius:9px;background:#fff"></div>
<div class="a" style="left:2306px;top:1080px;width:40px;height:40px;border-radius:7px;background:#000"></div>
<div class="t" style="left:2357px;top:1086px;font-size:27.5px;color:#606266">黑色</div>
<svg style="left:2770px;top:1090px" width="22" height="13" viewBox="0 0 22 13" fill="none" stroke="#a8abb2" stroke-width="1.6"><path d="M1 1l10 10 10-10"/></svg>
<div class="t" style="left:2243px;top:1156px;font-size:32px;font-weight:700;color:#000">尾注/脚注颜色：</div>
<div class="a" style="left:2282px;top:1206px;width:531px;height:59px;border:2px solid #d5d8e0;border-radius:9px;background:#fff"></div>
<div class="a" style="left:2306px;top:1222px;width:40px;height:40px;border-radius:7px;background:#000"></div>
<div class="t" style="left:2357px;top:1227px;font-size:27.5px;color:#606266">黑色</div>
<svg style="left:2770px;top:1231px" width="22" height="13" viewBox="0 0 22 13" fill="none" stroke="#a8abb2" stroke-width="1.6"><path d="M1 1l10 10 10-10"/></svg>
<div class="a" style="left:2242px;top:1330px;width:575px;height:2px;background:#8f8f8f"></div>
<div class="a" style="left:2242px;top:1332px;width:575px;height:1px;background:#e6e6e6"></div>
<div class="a" style="left:2232px;top:1380px;width:595px;height:149px;border:3px solid #6b77b3;border-radius:6px"></div>
<div class="t" style="left:2242px;top:1405px;font-size:32px;font-weight:700;color:#000">引用文献更新策略</div>
<div class="a" style="left:2282.5px;top:1474.5px;width:23px;height:23px;border:2px solid #d8dbe3;border-radius:50%;background:#fff"></div>
<div class="t" style="left:2328px;top:1476px;font-size:28px;color:#606266">自动更新</div>
<div class="a" style="left:2498px;top:1474px;width:28px;height:28px;border-radius:50%;background:#409eff"></div>
<div class="a" style="left:2507px;top:1483px;width:10px;height:10px;border-radius:50%;background:#fff"></div>
<div class="t" style="left:2542px;top:1476px;font-size:28px;color:#409eff">手动更新</div>
<div class="a" style="left:2243px;top:1673px;width:171px;height:58px;border:2px solid #d8dbe3;border-radius:9px;background:#fff"></div>
<div class="t" style="left:2275px;top:1691px;font-size:28px;color:#606266">退出登录</div>


<!-- STATUS BAR -->
<div class="a" style="left:0;top:1779px;width:2880px;height:43px;background:#f4f4f4;border-top:2px solid #fdfdfd"></div>
<div class="t" style="left:21px;top:1792px;font-size:24px;letter-spacing:0.55px;color:#333">第 1 页，共 1 页</div>
<div class="t" style="left:236px;top:1792px;font-size:24px;letter-spacing:0.8px;color:#333">253 个字</div>
<svg style="left:373px;top:1790px" width="30" height="28" viewBox="0 0 30 28" fill="none" stroke="#111" stroke-width="1.9"><path d="M13.5 10.5V4C13.5 2.2 12.8 1.2 11.3 1.2H1V24.3H11.5C12.8 24.3 13.5 23.3 13.5 22V15.5M13.5 4C13.5 2.2 14.5 1.2 16 1.2H25.8V11"/><path d="M15 13l12 12M27 13L15 25" stroke="#222"/></svg>
<div class="t" style="left:435px;top:1792px;font-size:24px;letter-spacing:0.45px;color:#333">英语(美国)</div>
<svg style="left:683px;top:1790px" width="30" height="28" viewBox="0 0 30 28" fill="none" stroke="#111" stroke-width="1.7"><path d="M9 24.5H1V1.5H27V9.5M1 5.6H27M3.6 9.3H9.5M3.6 13.3H7.5M3.6 17.3H7.5"/><circle cx="19" cy="18" r="7.3"/><circle cx="19" cy="18" r="3.7" fill="#222" stroke="none"/></svg>
<svg style="left:745px;top:1788px" width="34" height="30" viewBox="0 0 34 30" fill="none" stroke="#111" stroke-width="1.7" stroke-linejoin="round"><circle cx="14" cy="5.5" r="3.4"/><path d="M10.6 7.7L5 5.5C3 5 2 7.5 3.6 8.7L10 11.3V17.5L7.5 25.5C7 27.8 9.8 28.5 11.3 27.3"/><path d="M17.4 7.7L23 5.5C25 5 26 7.5 24.4 8.7L18 11.3V16.5"/><path d="M14.8 22L21 28.3 31.5 17.3" stroke="#222"/></svg>
<div class="t" style="left:781px;top:1792px;font-size:24px;color:#333">辅助功能: 一切就绪</div>

<svg style="left:2164px;top:1788px" width="30" height="30" viewBox="0 0 30 30" fill="none" stroke="#333" stroke-width="1.8"><path d="M1 8V1h7M22 1h7v7M29 22v7h-7M8 29H1v-7"/><path d="M8 6h9l6 6v12H8z"/><path d="M17 6v6h6"/></svg>
<div class="t" style="left:2198px;top:1790px;font-size:24px;color:#333">专注</div>
<svg style="left:2296px;top:1788px" width="28" height="26" viewBox="0 0 28 26" fill="none" stroke="#333" stroke-width="1.8"><path d="M1 2h10c1.5 0 3 1 3 2.5C14 3 15.5 2 17 2h10v22H17c-1.5 0-3 .5-3 1.5 0-1-1.5-1.5-3-1.5H1z M14 4.5V25"/><path d="M4.5 7h6M4.5 11h6M4.5 15h6M4.5 19h6M17.5 7h6M17.5 11h6M17.5 15h6M17.5 19h6"/></svg>
<div class="a" style="left:2351px;top:1781px;width:80px;height:43px;background:#dddddd"></div>
<svg style="left:2378px;top:1788px" width="24" height="30" viewBox="0 0 24 30" fill="none" stroke="#222" stroke-width="1.8"><path d="M1.5 1.5h21v27h-21z"/><path d="M5.5 7h13M5.5 11h13M5.5 15h13M5.5 19h13M5.5 23h13"/></svg>
<svg style="left:2456px;top:1788px" width="32" height="30" viewBox="0 0 32 30" fill="none" stroke="#333" stroke-width="1.8"><path d="M12 27H1.5V1.5h24v9"/><path d="M1.5 5.5h24M5 11h9M5 15h6M5 19h5"/><circle cx="21" cy="20.5" r="8"/><path d="M13 20.5h16M21 12.5c-3 3-3 13 0 16M21 12.5c3 3 3 13 0 16"/></svg>
<div class="a" style="left:2523px;top:1802px;width:15px;height:1.6px;background:#555"></div>
<div class="a" style="left:2550px;top:1802px;width:198px;height:1.6px;background:#555"></div>
<div class="a" style="left:2648px;top:1797px;width:1.6px;height:12px;background:#555"></div>
<div class="a" style="left:2602px;top:1792px;width:10px;height:22px;border-radius:2px;background:#5f5f5f"></div>
<div class="a" style="left:2759px;top:1802px;width:15px;height:1.6px;background:#555"></div>
<div class="a" style="left:2766px;top:1795px;width:1.6px;height:15px;background:#555"></div>
<div class="t" style="left:2800px;top:1791px;font-size:25px;color:#333">60%</div>

</body></html>
